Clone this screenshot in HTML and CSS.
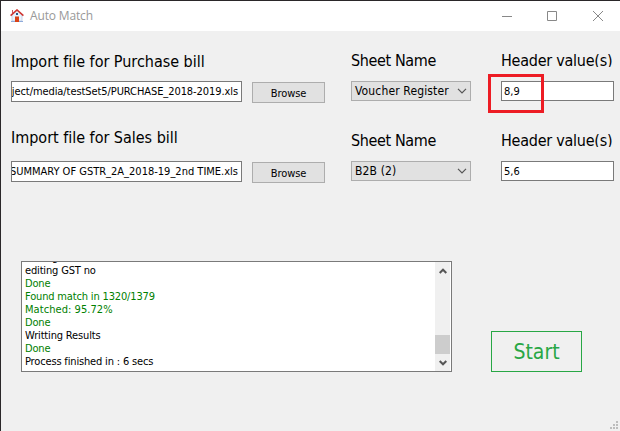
FILE: index.html
```html
<!DOCTYPE html>
<html lang="en">
<head>
<meta charset="utf-8">
<title>Auto Match</title>
<link rel="stylesheet" href="styles.css">
</head>
<body>
<div class="window">
  <header class="titlebar">
    <svg class="home" width="14" height="14" viewBox="0 0 14 14">
      <path d="M2 6 7 1.500 12 6V12H2Z" fill="#eaf2fc" stroke="#b4c6e0" stroke-width=".7"/>
      <path d="M.6 6.600 7 .9l6.400 5.700" fill="none" stroke="#cf3530" stroke-width="1.500"/>
      <path d="M2.500 1v3" stroke="#c9555a" stroke-width="1"/>
      <path d="M5 7.500h4V13H5z" fill="#d94216"/>
      <path d="M6 4h2v2H6z" fill="#255b8c"/>
      <path d="M1 12.500h4M9 12.500h4" stroke="#8eaada"/>
    </svg>
    <h1>Auto Match</h1>
    <svg class="controls" width="104" height="10" viewBox="0 0 104 10" fill="none" stroke="#888">
      <path d="M0 5.500h10M45.500.5h9v9h-9zM91 0l10 10M101 0 91 10"/>
    </svg>
  </header>
  <main>
    <section class="row first">
      <div class="field"><label class="import">Import file for Purchase bill</label><div class="input path"><span>ject/media/testSet5/PURCHASE_2018-2019.xls</span></div></div>
      <button class="browse">Browse</button>
      <div class="field"><label class="sheet">Sheet Name</label><div class="select"><span>Voucher Register</span><svg width="10" height="6" viewBox="0 0 10 6"><path d="M1 .8 5 4.800 9 .8" fill="none" stroke="#555" stroke-width="1.200"/></svg></div></div>
      <div class="field"><label class="head">Header value(s)</label><div class="input value">8,9<i class="highlight"></i></div></div>
    </section>
    <section class="row second">
      <div class="field"><label class="import">Import file for Sales bill</label><div class="input path"><span>SUMMARY OF GSTR_2A_2018-19_2nd TIME.xls</span></div></div>
      <button class="browse">Browse</button>
      <div class="field"><label class="sheet">Sheet Name</label><div class="select"><span>B2B (2)</span><svg width="10" height="6" viewBox="0 0 10 6"><path d="M1 .8 5 4.800 9 .8" fill="none" stroke="#555" stroke-width="1.200"/></svg></div></div>
      <div class="field"><label class="head">Header value(s)</label><div class="input value">5,6</div></div>
    </section>
    <section class="bottom">
      <div class="log">
        <div class="lines">
          <p>editing</p>
          <p>editing GST no</p>
          <p class="ok">Done</p>
          <p class="ok">Found match in 1320/1379</p>
          <p class="ok matched">Matched: 95.72%</p>
          <p class="ok">Done</p>
          <p>Writting Results</p>
          <p class="ok">Done</p>
          <p>Process finished in : 6 secs</p>
        </div>
        <div class="scroll">
          <svg width="8" height="6" viewBox="0 0 8 6"><path d="M.7 5 4 1.700 7.300 5" fill="none" stroke="#555" stroke-width="2"/></svg>
          <div class="thumb"></div>
          <svg width="8" height="6" viewBox="0 0 8 6"><path d="M.7 1 4 4.300 7.300 1" fill="none" stroke="#555" stroke-width="2"/></svg>
        </div>
      </div>
      <button class="start">Start</button>
    </section>
  </main>
  <svg class="grip" width="8" height="8" viewBox="0 0 8 8" fill="#bdbdbd"><path d="M6 0h2v2H6zM3 3h2v2H3zM6 3h2v2H6zM0 6h2v2H0zM3 6h2v2H3zM6 6h2v2H6z"/></svg>
</div>
</body>
</html>
```

FILE: styles.css
```css
* { box-sizing: border-box; }
body { margin: 0; overflow: hidden; }
.window {
  position: relative;
  width: 620px;
  height: 431px;
  background: #f0f0f0;
  border: solid #2a2729;
  border-width: 1px 0 0 1px;
  font-family: "DejaVu Sans Condensed", "DejaVu Sans", sans-serif;
  font-stretch: condensed;
  font-size: 11px;
  color: #000;
}
.titlebar {
  display: flex;
  align-items: center;
  height: 30px;
  padding-left: 9px;
  background: #fff;
}
.home { margin-top: -1px; }
h1 {
  margin: -1px 0 0 6px;
  font: 12px "Open Sans", sans-serif;
  letter-spacing: -.15px;
  color: #999;
}
.controls { margin: -1px 14px 0 auto; }
main { padding: 19px 0 0 10px; }
.row {
  display: grid;
  grid-template-columns: 231px 10px 73px 26px 120px 30px 113px;
  height: 80px;
}
.row > :nth-child(1) { grid-column: 1; }
.row > :nth-child(2) { grid-column: 3; }
.row > :nth-child(3) { grid-column: 5; }
.row > :nth-child(4) { grid-column: 7; }
label {
  display: block;
  height: 31px;
  font-size: 16px;
  line-height: 20px;
  white-space: nowrap;
}
.import { letter-spacing: -.02px; }
.first .import { padding-top: 2px; }
.second .import { margin-top: -2px; height: 33px; }
.sheet { padding-top: 1px; letter-spacing: -.38px; }
.head {
  height: 17px;
  margin-bottom: 14px;
  overflow: hidden;
  line-height: 22px;
  letter-spacing: -.25px;
}
.input {
  display: flex;
  align-items: center;
  height: 20px;
  padding-left: 2px;
  background: #fff;
  border: 1px solid #7a7a7a;
  white-space: nowrap;
}
.path {
  height: 21px;
  justify-content: flex-end;
  padding: 0 3px 0 0;
  overflow: hidden;
  letter-spacing: -.08px;
}
.second .path { letter-spacing: 0; }
.value { position: relative; }
.highlight {
  position: absolute;
  left: -14px;
  top: -8px;
  width: 56px;
  height: 39px;
  border: 3px solid #ed1c24;
}
button { padding: 0; font-family: inherit; font-stretch: inherit; font-size: 11px; }
.browse {
  height: 21px;
  margin-top: 32px;
  padding-top: 1px;
  background: #e1e1e1;
  border: 1px solid #adadad;
  letter-spacing: -.1px;
}
.select {
  display: flex;
  align-items: center;
  justify-content: space-between;
  height: 20px;
  padding: 0 3px;
  background: #e1e1e1;
  border: 1px solid #adadad;
  font-size: 12px;
  letter-spacing: .14px;
  white-space: nowrap;
}
.bottom { display: flex; align-items: flex-end; height: 162px; padding-left: 10px; }
.log {
  display: flex;
  width: 431px;
  height: 111px;
  background: #fff;
  border: 1px solid #7a7a7a;
}
.lines {
  display: flex;
  flex-direction: column;
  justify-content: flex-end;
  flex: 1;
  overflow: hidden;
  padding: 0 0 3px 3px;
  letter-spacing: -.16px;
}
p { flex: none; margin: 0; height: 13px; line-height: 13px; white-space: nowrap; }
.ok { color: #008000; }
.matched { letter-spacing: .06px; }
.scroll {
  display: flex;
  flex-direction: column;
  align-items: center;
  width: 15px;
  margin-right: 1px;
  padding: 6px 0 5px;
  background: #f0f0f0;
}
.thumb { width: 15px; height: 19px; margin: auto 0 6px; background: #cdcdcd; }
.start {
  width: 91px;
  height: 41px;
  margin-left: 39px;
  background: transparent;
  border: 1px solid #28a745;
  color: #28a745;
  font-size: 21px;
}
.grip { position: absolute; right: 2px; bottom: 2px; }
```
